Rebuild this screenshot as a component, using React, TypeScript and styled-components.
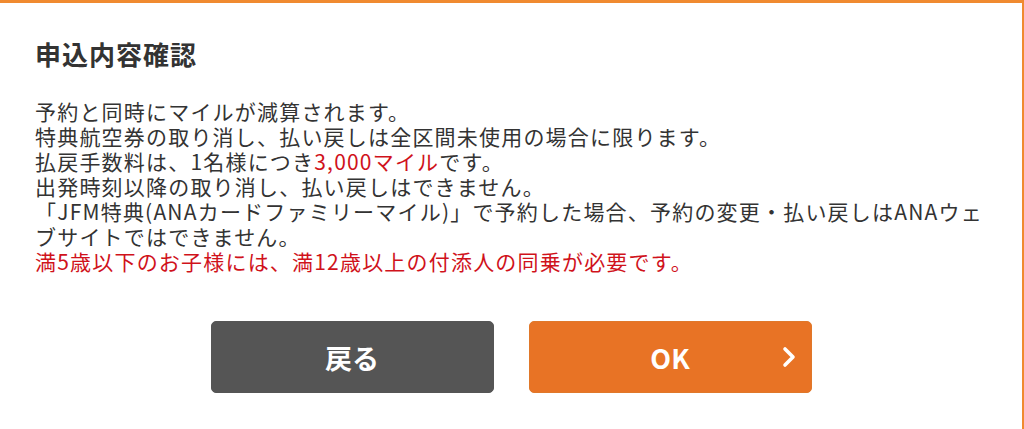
import React from "react";
import styled, { createGlobalStyle } from "styled-components";

const Global = createGlobalStyle`
  html, body { margin: 0; padding: 0; background: #fff; }
  body { font-family: "Noto Sans CJK JP", "Noto Sans", sans-serif; color: #333; }
`;

const Dialog = styled.div`
  box-sizing: border-box;
  width: 1024px;
  height: 429px;
  border-top: 3px solid #f08a30;
  border-right: 2px solid #f08a30;
  padding: 35px 37px 0 35px;
  display: flex;
  flex-direction: column;
`;

const Title = styled.h2`
  margin: 0;
  font-size: 26px;
  line-height: 32px;
  font-weight: 700;
  letter-spacing: 1px;
  color: #333;
`;

const Body = styled.div`
  margin-top: 29px;
  font-size: 21px;
  line-height: 25px;
  letter-spacing: 1.2px;
  color: #333;
`;

const Line = styled.p<{ $red?: boolean }>`
  margin: 0;
  color: ${(p) => (p.$red ? "#d0121b" : "inherit")};
`;

const Red = styled.span`
  color: #d0121b;
`;

const Actions = styled.div`
  margin-top: 47px;
  margin-left: -35px;
  margin-right: -37px;
  display: flex;
  justify-content: center;
  gap: 35px;
`;

const Button = styled.button<{ $primary?: boolean }>`
  position: relative;
  box-sizing: border-box;
  width: 283px;
  height: 72px;
  border: 1px solid ${(p) => (p.$primary ? "#e0782a" : "#555")};
  border-radius: 5px;
  background: ${(p) => (p.$primary ? "#e87325" : "#555555")};
  color: #fff;
  font-family: "Noto Sans CJK JP", "Noto Sans", sans-serif;
  font-size: 27px;
  font-weight: 700;
  display: flex;
  align-items: center;
  justify-content: center;
  padding: 0;
  cursor: pointer;
`;

const Chevron = styled.svg`
  position: absolute;
  right: 14px;
  top: 50%;
  transform: translateY(-50%);
`;

export default function App() {
  return (
    <>
      <Global />
      <Dialog>
        <Title>申込内容確認</Title>
        <Body>
          <Line>予約と同時にマイルが減算されます。</Line>
          <Line>特典航空券の取り消し、払い戻しは全区間未使用の場合に限ります。</Line>
          <Line>
            払戻手数料は、1名様につき<Red>3,000マイル</Red>です。
          </Line>
          <Line>出発時刻以降の取り消し、払い戻しはできません。</Line>
          <Line>
            「JFM特典(ANAカードファミリーマイル)」で予約した場合、予約の変更・払い戻しはANAウェブサイトではできません。
          </Line>
          <Line $red>満5歳以下のお子様には、満12歳以上の付添人の同乗が必要です。</Line>
        </Body>
        <Actions>
          <Button>戻る</Button>
          <Button $primary>
            OK
            <Chevron width="16" height="24" viewBox="0 0 16 24">
              <path d="M4 4 L12 12 L4 20" fill="none" stroke="#fff" strokeWidth="3.6" strokeLinecap="round" strokeLinejoin="round" />
            </Chevron>
          </Button>
        </Actions>
      </Dialog>
    </>
  );
}
